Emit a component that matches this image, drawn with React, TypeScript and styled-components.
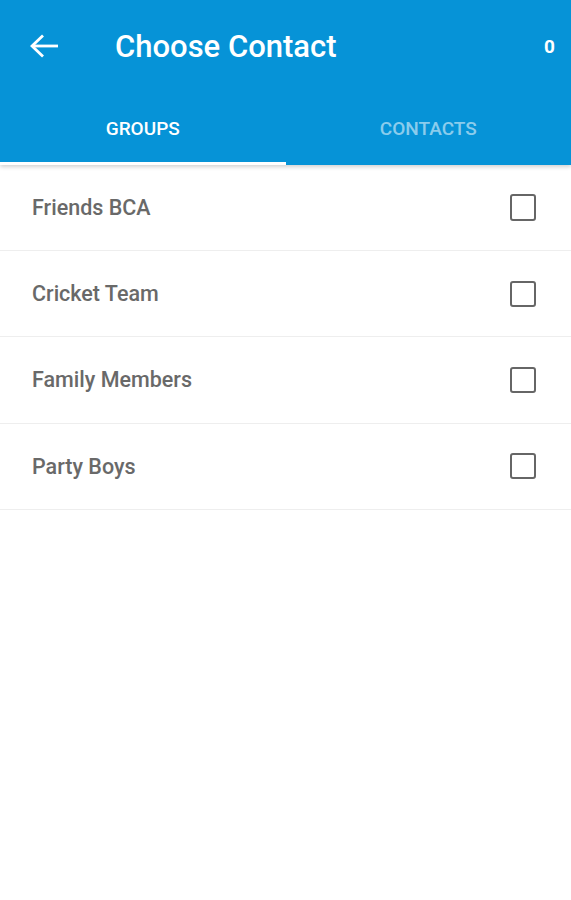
import React, { useState } from 'react';
import styled, { createGlobalStyle } from 'styled-components';

const GlobalStyle = createGlobalStyle`
  html, body {
    margin: 0;
    padding: 0;
    background: #ffffff;
    font-family: Roboto, 'Noto Sans', Arial, sans-serif;
  }
`;

const groups = ['Friends BCA', 'Cricket Team', 'Family Members', 'Party Boys'];

const Screen = styled.div`
  width: 571px;
  min-height: 900px;
  background: #ffffff;
`;

const Header = styled.header`
  background: #0693d7;
  color: #ffffff;
  box-shadow: 0 2px 4px rgba(0, 0, 0, 0.18);
  position: relative;
  z-index: 1;
`;

const TopBar = styled.div`
  height: 92px;
  display: flex;
  align-items: center;
  padding: 0 16px 0 30px;
`;

const BackButton = styled.button`
  background: none;
  border: 0;
  padding: 0;
  width: 28px;
  height: 24px;
  display: flex;
  align-items: center;
  cursor: pointer;
`;

const Title = styled.h1`
  flex: 1;
  margin: 0 0 0 57px;
  font-size: 31px;
  font-weight: 500;
  letter-spacing: 0;
`;

const Counter = styled.span`
  font-size: 19px;
  font-weight: 700;
`;

const Tabs = styled.nav`
  height: 73px;
  display: flex;
`;

const Tab = styled.button<{ $active: boolean }>`
  flex: 1;
  background: none;
  border: 0;
  border-bottom: 3px solid ${(p) => (p.$active ? '#ffffff' : 'transparent')};
  padding: 2px 0 0;
  color: ${(p) => (p.$active ? '#ffffff' : 'rgba(255, 255, 255, 0.55)')};
  font-family: inherit;
  font-size: 19px;
  font-weight: 500;
  text-transform: uppercase;
  cursor: pointer;
`;

const List = styled.ul`
  list-style: none;
  margin: 0;
  padding: 0;
`;

const Row = styled.li`
  height: 85.2px;
  display: flex;
  align-items: center;
  justify-content: space-between;
  padding: 0 35px 0 32px;
  border-bottom: 1.5px solid #eeeeee;
`;

const Name = styled.span`
  font-size: 21.5px;
  font-weight: 500;
  color: #696969;
`;

const Box = styled.span<{ $checked: boolean }>`
  width: 22.5px;
  height: 22.5px;
  border: 2.8px solid #666666;
  border-radius: 3px;
  background: ${(p) => (p.$checked ? '#666666' : 'transparent')};
  cursor: pointer;
`;

const ArrowIcon = () => (
  <svg width="28" height="24" viewBox="0 0 28 24" fill="none" stroke="#ffffff" strokeWidth="2.8">
    <line x1="2" y1="12" x2="28" y2="12" />
    <polyline points="13,1.5 2,12 13,22.5" />
  </svg>
);

export default function App() {
  const [tab, setTab] = useState('groups');
  const [checked, setChecked] = useState<string[]>([]);

  const toggle = (name: string) =>
    setChecked((c) => (c.includes(name) ? c.filter((n) => n !== name) : [...c, name]));

  return (
    <Screen>
      <GlobalStyle />
      <Header>
        <TopBar>
          <BackButton aria-label="Back">
            <ArrowIcon />
          </BackButton>
          <Title>Choose Contact</Title>
          <Counter>{checked.length}</Counter>
        </TopBar>
        <Tabs>
          <Tab $active={tab === 'groups'} onClick={() => setTab('groups')}>Groups</Tab>
          <Tab $active={tab === 'contacts'} onClick={() => setTab('contacts')}>Contacts</Tab>
        </Tabs>
      </Header>
      <List>
        {groups.map((g) => (
          <Row key={g}>
            <Name>{g}</Name>
            <Box $checked={checked.includes(g)} onClick={() => toggle(g)} />
          </Row>
        ))}
      </List>
    </Screen>
  );
}
